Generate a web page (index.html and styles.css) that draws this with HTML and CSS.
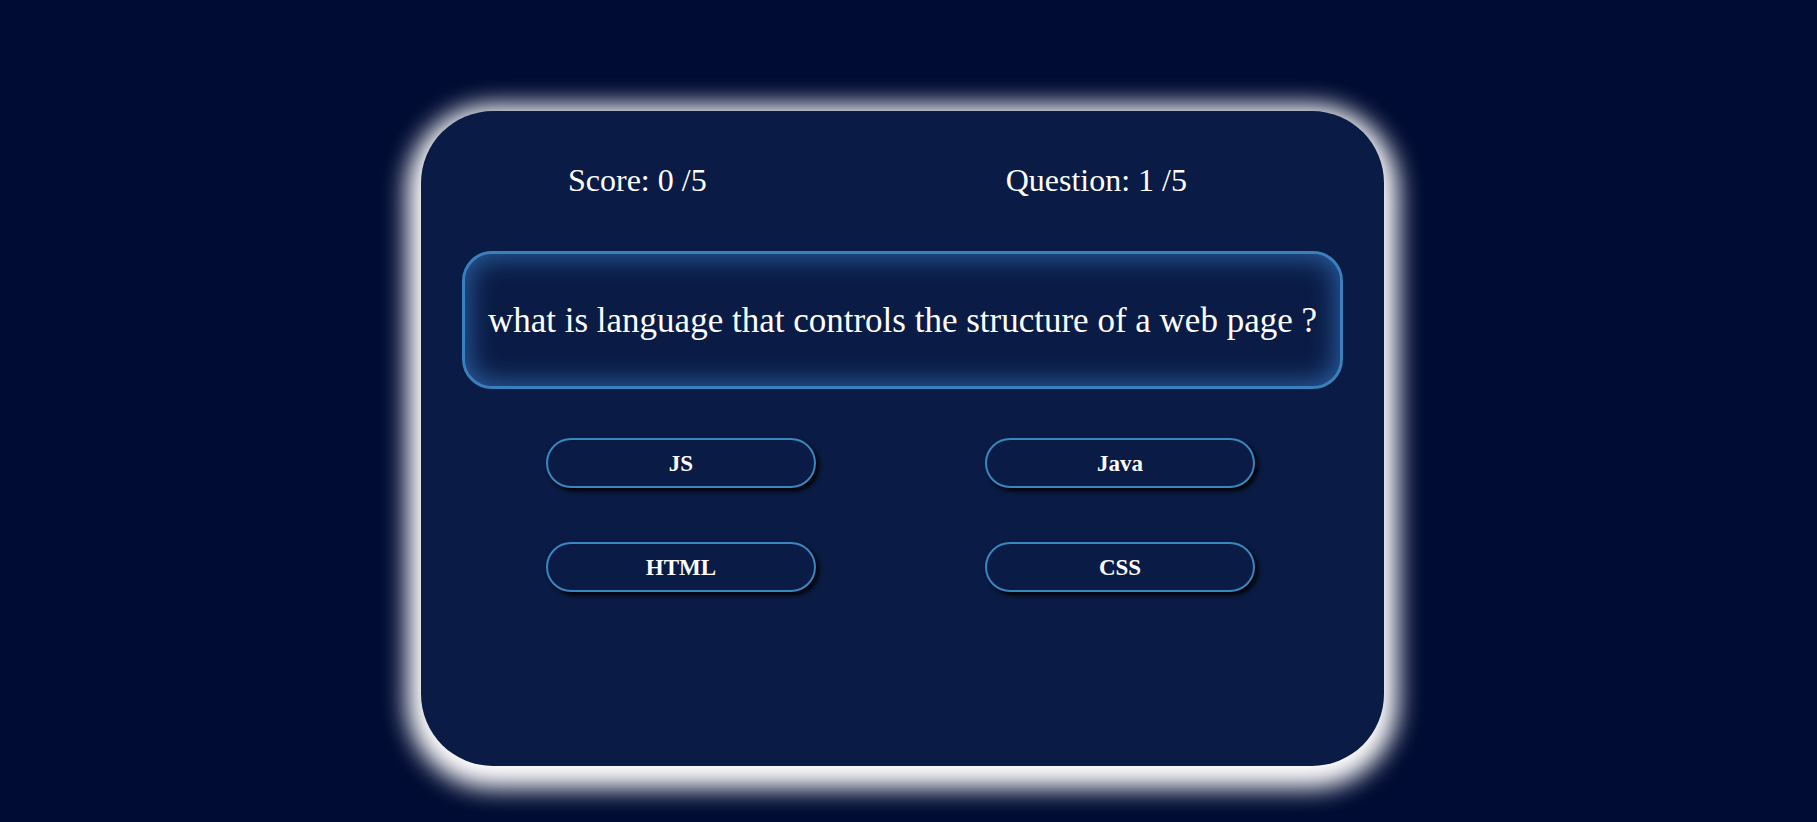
FILE: index.html
```html
<!DOCTYPE html>
<html>
<head>
<meta charset="utf-8">
<link rel="stylesheet" href="styles.css">
</head>
<body>
<div class="page">
  <div class="card">
    <div class="header">
      <span class="score">Score: 0 /5</span>
      <span class="count">Question: 1 /5</span>
    </div>
    <div class="question">what is language that controls the structure of a web page ?</div>
    <div class="answers">
      <button class="answer">JS</button>
      <button class="answer">Java</button>
      <button class="answer">HTML</button>
      <button class="answer">CSS</button>
    </div>
  </div>
</div>
</body>
</html>
```

FILE: styles.css
```css
html, body {
  margin: 0;
  padding: 0;
  background: #000c33;
}
body {
  width: 1817px;
  height: 822px;
  overflow: hidden;
  font-family: "Liberation Serif", "Times New Roman", serif;
  color: #fff;
}
.page {
  display: flex;
  justify-content: center;
  padding-top: 111px;
  padding-right: 12px;
}
.card {
  box-sizing: border-box;
  width: 963px;
  height: 655px;
  background: #0a1c45;
  border-radius: 72px;
  box-shadow: 0 8px 25px 14px #ffffff;
  padding: 51px 41px 0 41px;
}
.header {
  display: flex;
  justify-content: space-between;
  padding-left: 106px;
  padding-right: 156px;
  font-size: 32px;
  line-height: 36px;
}
.question {
  margin-top: 53px;
  height: 138px;
  box-sizing: border-box;
  border: 3px solid #3a80bc;
  border-radius: 30px;
  box-shadow: inset 0 0 26px 4px #2a5c9c;
  font-size: 35px;
  line-height: 40px;
  padding-top: 47px;
  text-align: center;
}
.answers {
  margin-top: 49px;
  display: grid;
  grid-template-columns: 270px 270px;
  column-gap: 169px;
  row-gap: 54px;
  justify-content: center;
  padding-right: 4px;
}
.answer {
  box-sizing: border-box;
  height: 50px;
  width: 270px;
  background: #0a1c45;
  border: 2px solid #3a86c0;
  border-radius: 25px;
  box-shadow: 3px 3px 5px #000;
  color: #fff;
  font-family: "Liberation Serif", "Times New Roman", serif;
  font-weight: bold;
  font-size: 23px;
  padding: 2px 0 0 0;
}
```
